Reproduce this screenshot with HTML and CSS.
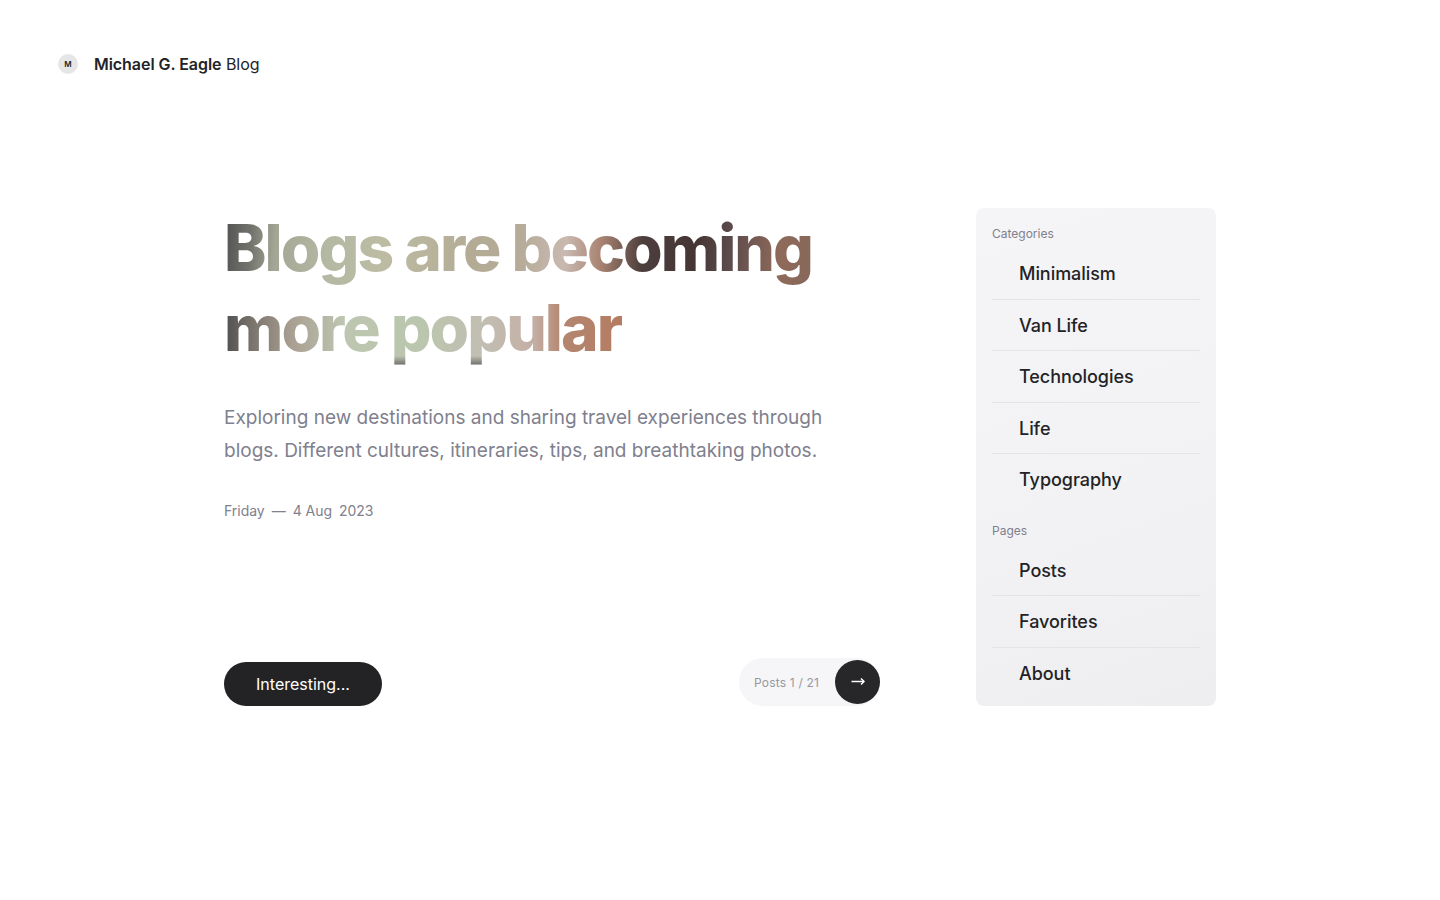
FILE: index.html
```html
<!DOCTYPE html>
<html lang="en">
<head>
    <meta charset="UTF-8">
    <meta name="viewport" content="width=device-width, initial-scale=1.0">
    <title>Michael G. Eagle Blog</title>
    <link rel="stylesheet" href="styles.css">
</head>
<body>
    <header class="site-header">
        <div class="avatar">M</div>
        <div class="brand"><strong>Michael G. Eagle</strong> Blog</div>
    </header>

    <main class="layout">
        <section class="post">
            <div class="post-text">
                <h1 class="title">
                    <span class="title-line title-one">Blogs are becoming</span>
                    <span class="title-line title-two">more popular</span>
                </h1>
                <p class="intro">Exploring new destinations and sharing travel experiences through blogs. Different cultures, itineraries, tips, and breathtaking photos.</p>
                <div class="date">
                    <span>Friday</span>
                    <span>—</span>
                    <span>4 Aug</span>
                    <span>2023</span>
                </div>
            </div>
            <div class="post-actions">
                <a class="read-button" href="#">Interesting...</a>
                <div class="pager">
                    <span class="pager-count">Posts 1 / 21</span>
                    <a class="pager-next" href="#" aria-label="Next post">
                        <svg width="14" height="10" viewBox="0 0 14 10" fill="none" stroke="#fff" stroke-width="1.5">
                            <path d="M0.5 4.5H13"/>
                            <path d="M10 1.5L13 4.5L10 7.5"/>
                        </svg>
                    </a>
                </div>
            </div>
        </section>

        <nav class="sidebar">
            <div class="nav-label">Categories</div>
            <ul class="nav-list">
                <li><a href="#">Minimalism</a></li>
                <li><a href="#">Van Life</a></li>
                <li><a href="#">Technologies</a></li>
                <li><a href="#">Life</a></li>
                <li><a href="#">Typography</a></li>
            </ul>
            <div class="nav-label">Pages</div>
            <ul class="nav-list nav-list-pages">
                <li><a href="#">Posts</a></li>
                <li><a href="#">Favorites</a></li>
                <li><a href="#">About</a></li>
            </ul>
        </nav>
    </main>
</body>
</html>
```

FILE: styles.css
```css
* {
    box-sizing: border-box;
}

body {
    margin: 0;
    height: 900px;
    background-color: #fff;
    color: #232326;
    font-family: 'Inter', 'Liberation Sans', sans-serif;
}

a {
    color: inherit;
    text-decoration: none;
}

.site-header {
    display: flex;
    align-items: center;
    gap: 16px;
    height: 127px;
    padding-left: 58px;
}

.avatar {
    display: flex;
    justify-content: center;
    align-items: center;
    width: 20px;
    height: 20px;
    border-radius: 50%;
    background-color: #e6e6e6;
    font-size: 8px;
    font-weight: 600;
}

.brand {
    font-size: 16px;
    letter-spacing: -0.05px;
}

.brand strong {
    font-weight: 600;
}

.layout {
    display: flex;
    gap: 96px;
    margin-top: 81px;
    padding-left: 224px;
}

.post {
    display: flex;
    flex-direction: column;
    justify-content: space-between;
    width: 656px;
    height: 498px;
}

.title {
    margin: 0;
    font-size: 64px;
    font-weight: 800;
    line-height: 80px;
    letter-spacing: -1.95px;
}

.title-line {
    display: block;
    width: fit-content;
    color: transparent;
    -webkit-background-clip: text;
    background-clip: text;
}

.title-one {
    background-image: linear-gradient(94deg, #505052 0%, #74746e 5%, #a3a694 9%, #b4b9a3 18%, #bdbca3 28%, #b4ab95 42%, #b5ab98 50%, #c9b9b0 58%, #a98372 64%, #4c3e3c 71%, #453635 80%, #5d4c4c 86%, #8f6a5a 94%, #86685a 100%);
}

.title-two {
    background-image: linear-gradient(180deg, rgba(100, 100, 100, 0) 85%, rgba(100, 100, 100, 0.8) 95%), linear-gradient(90deg, #4f4f50 0%, #7f7870 8%, #a99f92 17%, #bdc6b0 30%, #bbc6ae 50%, #c2bdb2 66%, #c4aea4 78%, #b38670 85%, #b57c62 100%);
}

.intro {
    margin: 33px 0 0;
    width: 620px;
    font-size: 19px;
    line-height: 33px;
    color: #80808e;
}

.date {
    display: flex;
    gap: 7px;
    margin-top: 33.5px;
    font-size: 14px;
    line-height: 20px;
    letter-spacing: -0.03px;
    color: #80808e;
}

.post-actions {
    display: flex;
    justify-content: space-between;
    align-items: flex-end;
}

.read-button {
    display: flex;
    justify-content: center;
    align-items: center;
    width: 158px;
    height: 44px;
    border-radius: 22px;
    background-color: #232325;
    color: #fff;
    font-size: 16px;
}

.pager {
    display: flex;
    align-items: center;
    justify-content: space-between;
    width: 141px;
    height: 48px;
    padding-left: 15px;
    border-radius: 24px;
    background-color: #f6f6f8;
}

.pager-count {
    font-size: 12px;
    letter-spacing: 0.2px;
    color: #98989f;
}

.pager-next {
    display: flex;
    justify-content: center;
    align-items: center;
    width: 45px;
    height: 44px;
    border-radius: 50%;
    background-color: #27272a;
}

.sidebar {
    width: 240px;
    height: 498px;
    padding: 16px;
    border-radius: 8px;
    background-image: linear-gradient(160deg, #f5f5f7 0%, #f2f2f4 60%, #eeeef0 100%);
}

.nav-label {
    font-size: 12px;
    line-height: 20px;
    color: #80808e;
}

.nav-list {
    margin: 4px 0 15.5px;
    padding: 0;
    list-style: none;
}

.nav-list-pages {
    margin-top: 3.5px;
}

.nav-list li {
    height: 51.5px;
    padding-left: 27px;
    border-bottom: 1px solid #e4e4e7;
    font-size: 18px;
    font-weight: 500;
    line-height: 51px;
    letter-spacing: -0.05px;
}

.nav-list li:last-child {
    border-bottom: 0;
}
```
